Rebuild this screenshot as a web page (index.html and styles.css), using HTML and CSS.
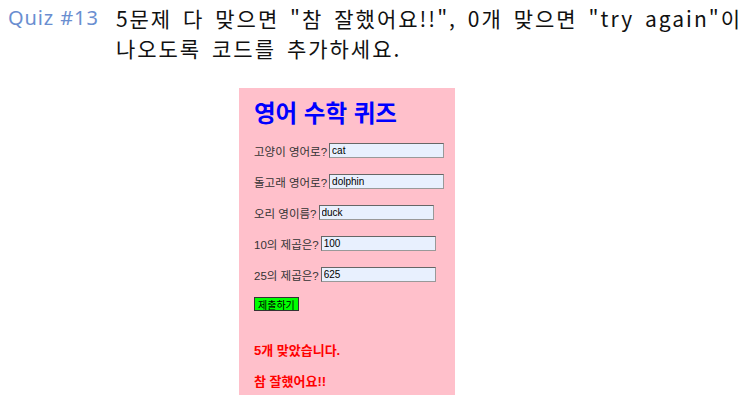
FILE: index.html
```html
<!DOCTYPE html>
<html lang="ko">
<head>
<meta charset="utf-8">
<link rel="stylesheet" href="styles.css">
</head>
<body>
<div class="top">
  <div class="qnum">Quiz #13</div>
  <div class="qtext">5문제 다 맞으면 "참 잘했어요!!", 0개 맞으면 "try again"이<br>나오도록 코드를 추가하세요.</div>
</div>
<div class="panel">
  <h1 class="title">영어 수학 퀴즈</h1>
  <div class="row"><span class="lbl">고양이 영어로?</span><input class="inp" value="cat"></div>
  <div class="row"><span class="lbl">돌고래 영어로?</span><input class="inp" value="dolphin"></div>
  <div class="row"><span class="lbl">오리 영이름?</span><input class="inp" value="duck"></div>
  <div class="row"><span class="lbl">10의 제곱은?</span><input class="inp" value="100"></div>
  <div class="row"><span class="lbl">25의 제곱은?</span><input class="inp" value="625"></div>
  <button class="btn">제출하기</button>
  <p class="res r1">5개 맞았습니다.</p>
  <p class="res r2">참 잘했어요!!</p>
</div>
</body>
</html>
```
FILE: styles.css
```css
html, body { margin: 0; padding: 0; background: #fff; }
body { font-family: "Noto Sans CJK KR", "Noto Sans", sans-serif; }
.top { display: flex; padding: 3px 0 0 8px; height: 88px; box-sizing: border-box; }
.qnum { width: 109px; color: #6a8ed0; font-size: 20px; letter-spacing: 0.9px; line-height: 30px; font-family: "Noto Sans", "Noto Sans CJK KR", sans-serif; }
.qtext { color: #111; font-size: 21px; letter-spacing: 2px; word-spacing: 3px; line-height: 30px; white-space: nowrap; }
.panel { margin-left: 239px; width: 216px; height: 307px; background: #ffc0cb; box-sizing: border-box; padding: 9px 0 0 15px; font-family: "Liberation Sans", "Noto Sans CJK KR", sans-serif; }
.title { margin: 0 0 16px; color: #0000ff; font-size: 23.5px; line-height: 30px; font-weight: bold; font-family: "Noto Sans CJK KR", sans-serif; }
.row { display: flex; align-items: center; height: 15px; margin-bottom: 16px; font-size: 11.5px; color: #333; }
.lbl { margin-right: 2px; }
.inp { height: 15px; box-sizing: border-box; border: 1px solid #999; border-top-color: #666; border-left-color: #666; background: #e8f0fe; font-family: "Liberation Sans", sans-serif; font-size: 10px; padding: 0 2px; width: 115px; }
.btn { display: block; margin-top: -1px; height: 14px; padding: 0 3px; background: #00ff00; border: 1px solid #333; font-size: 10px; line-height: 11px; font-family: "Noto Sans CJK KR", sans-serif; color: #000; }
.res { margin: 0; color: #ff0000; font-weight: bold; font-size: 13px; line-height: 16px; }
.r1 { margin-top: 32px; }
.r2 { margin-top: 15px; }
```
